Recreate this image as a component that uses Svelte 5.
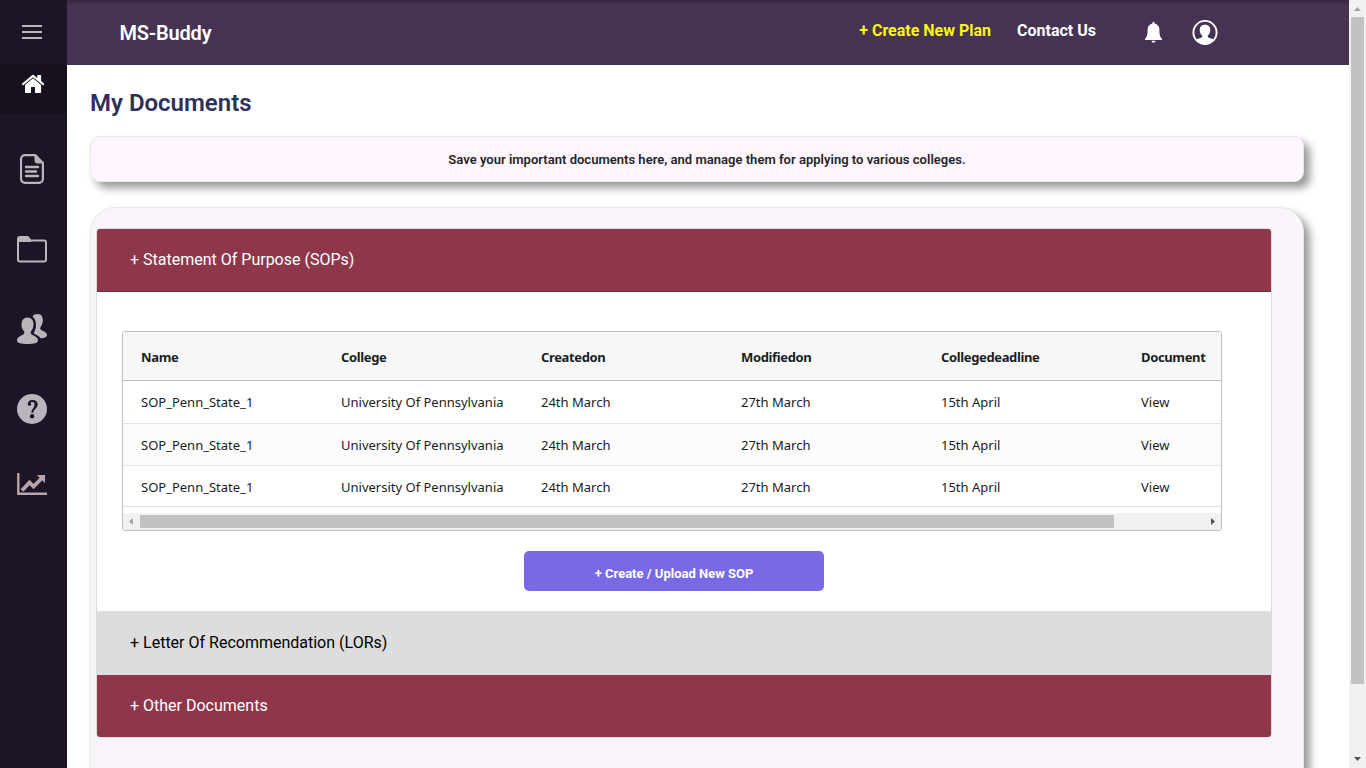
<script>
  const columns = ['Name', 'College', 'Createdon', 'Modifiedon', 'Collegedeadline', 'Document'];
  const row = ['SOP_Penn_State_1', 'University Of Pennsylvania', '24th March', '27th March', '15th April', 'View'];
  const rows = [row, row, row];
</script>

<div class="app">
  <aside class="sidebar">
    <button class="nav menu" aria-label="Menu">
      <svg width="20" height="14" viewBox="0 0 20 14"><path d="M0 0h20v2H0zM0 6h20v2H0zM0 12h20v2H0z" fill="#bab5bd" /></svg>
    </button>
    <button class="nav home" aria-label="Home">
      <svg width="24" height="20" viewBox="0 0 24 20" fill="#fff">
        <path d="M12 4.200 4 10.900v7.400c0 .5.300.7.700.7H10v-6h4v6h5.300c.5 0 .8-.3.8-.7v-7.400z" />
        <path d="M11 1.200Q12 .5 13 1.200L16.200 4V1.700q0-.6.6-.6h2.700q.6 0 .6.600V7l2.900 2.500q.5.500.1 1l-.5.600q-.5.400-1 0L12 3.200 2.600 11.100q-.5.400-1 0l-.6-.700q-.4-.5.100-1z" />
      </svg>
    </button>
    <button class="nav item" aria-label="Documents">
      <svg width="24" height="30" viewBox="0 0 24 30" fill="none" stroke="#bab5bd" stroke-linecap="round" stroke-linejoin="round">
        <path d="M5 1.100h10.200L22.900 9v15.800a4 4 0 0 1-4 4H5a4 4 0 0 1-4-4V5.100a4 4 0 0 1 4-4z" stroke-width="2.200" />
        <path d="M15 1.500V7a2 2 0 0 0 2 2h5.500z" fill="#bab5bd" stroke-width="1" />
        <path d="M6 13h12M6 17.500h10M6 22h12" stroke-width="2.400" />
      </svg>
    </button>
    <button class="nav item" aria-label="Folders">
      <svg width="30" height="27" viewBox="0 0 30 27">
        <path d="M1 5V3q0-2 2-2h7q1.500 0 2 1.500T14 4.500h13q2 0 2 2V23.500q0 2-2 2H3q-2 0-2-2z" fill="none" stroke="#bab5bd" stroke-width="2" />
        <path d="M1 6V3q0-2.500 2.500-2.500h6Q12 .5 12.500 3l1.500 1.500V6z" fill="#bab5bd" />
      </svg>
    </button>
    <button class="nav item" aria-label="People">
      <svg width="30" height="30" viewBox="0 0 30 30" fill="#bab5bd">
        <path d="M10.500 3.500c4 0 6 3 6 7 0 3-1 5-2.300 6.500-.8 1-.7 2.700.5 3.500 2.500 1.500 6.300 2.700 6.300 5.700 0 2.800-4 3.800-10.500 3.800S0 29 0 26.200c0-3 3.800-4.200 6.300-5.700 1.200-.8 1.300-2.500.5-3.500C5.500 15.500 4.500 13.500 4.500 10.500c0-4 2-7 6-7z" />
        <path d="M15.500 2.500C16.500.8 18.200 0 20.500 0c4 0 5.300 2.800 5.300 6.200 0 2.800-.8 4.700-2 6.300-.9 1.200-.9 2.600.4 3.400 2.400 1.400 5.800 2.400 5.800 5.100 0 2-2.500 3.200-6.300 3.300-1.700-2.800-5.600-3.800-6.600-4.900-.7-.8 1.300-3 1.800-6.400.5-4-.5-8.200-3.400-10.500z" />
      </svg>
    </button>
    <button class="nav item" aria-label="Help">
      <svg width="30" height="30" viewBox="0 0 30 30">
        <circle cx="15" cy="15" r="15" fill="#bab5bd" />
        <path d="M11.900 10.200C11.600 7.700 13.300 7 15.100 7c3 0 4.400 1.700 4.400 3.700 0 3.500-4.300 3.800-4.300 8" fill="none" stroke="#1d1526" stroke-width="1.900" />
        <circle cx="12.500" cy="10.200" r="1.600" fill="#1d1526" />
        <path d="M16.500 6.300c4.300.5 5.200 5.200 2.400 7.600l-3 2.300c1.700-3 2.300-6.800.6-9.900z" fill="#1d1526" />
        <circle cx="15.100" cy="22.300" r="2.200" fill="#1d1526" />
      </svg>
    </button>
    <button class="nav item chart" aria-label="Statistics">
      <svg width="30" height="22" viewBox="0 0 30 22">
        <path d="M1.300 0v20.700H30" fill="none" stroke="#b8a5ac" stroke-width="2.400" />
        <path d="m5 17.500 7.500-8 4 4 8-8" fill="none" stroke="#b8a5ac" stroke-width="3.800" />
        <path d="M20 2h8v8z" fill="#b8a5ac" />
      </svg>
    </button>
  </aside>

  <div class="page">
    <header>
      <span class="brand">MS-Buddy</span>
      <nav>
        <span class="create">+ Create New Plan</span>
        <span class="contact">Contact Us</span>
        <svg class="bell" width="17" height="21" viewBox="0 0 17 21" fill="#fff">
          <path d="M8.500 0c.8 0 1.300.6 1.300 1.400 3 .8 4.600 3.200 4.600 6.300 0 5 .6 7.300 2.600 9V18H0v-1.300c2-1.700 2.600-4 2.600-9 0-3.100 1.600-5.500 4.600-6.300C7.200.6 7.700 0 8.500 0zM6.500 18.800h4c-.2 1.200-1 1.900-2 1.900s-1.800-.7-2-1.900z" />
        </svg>
        <svg class="avatar" width="26" height="26" viewBox="0 0 26 26">
          <circle cx="13" cy="12.500" r="11.600" fill="none" stroke="#fff" stroke-width="1.900" />
          <path d="M13 4.700c3.500 0 5.300 2.100 5.300 5.300 0 2.300-.9 4-2.200 5.300-.5.500-.5 1.700.1 2.100 2 .9 3.800 1.200 5.500 1.900A11.500 11.500 0 0 1 13 24.500a11.500 11.500 0 0 1-8.700-5.200c1.700-.700 3.500-1 5.500-1.900.6-.4.600-1.600.1-2.100C8.600 14 7.700 12.300 7.700 10c0-3.200 1.800-5.300 5.300-5.300z" fill="#fff" />
        </svg>
      </nav>
    </header>
    <main>
      <h1>My Documents</h1>
      <div class="banner"><span>Save your important documents here, and manage them for applying to various colleges.</span></div>
      <section class="panel">
        <div class="accordion">
          <div class="head first"><span>+ Statement Of Purpose (SOPs)</span></div>
          <div class="body">
            <div class="grid">
              <div class="row labels">
                {#each columns as column}<span>{column}</span>{/each}
              </div>
              {#each rows as cells}
                <div class="row">
                  {#each cells as cell}<span>{cell}</span>{/each}
                </div>
              {/each}
              <div class="hscroll">
                <svg width="17" height="17" viewBox="0 0 17 17"><path d="M10 5v7L6 8.500z" fill="#a3a3a3" /></svg>
                <div class="track"><div class="thumb"></div></div>
                <svg width="17" height="17" viewBox="0 0 17 17"><path d="M7 5v7l4-3.500z" fill="#505050" /></svg>
              </div>
            </div>
            <button class="upload"><span>+ Create / Upload New SOP</span></button>
          </div>
          <div class="head light"><span>+ Letter Of Recommendation (LORs)</span></div>
          <div class="head last"><span>+ Other Documents</span></div>
        </div>
      </section>
    </main>
  </div>

  <div class="vscroll">
    <svg width="17" height="17" viewBox="0 0 17 17"><path d="M5 11h7L8.500 7z" fill="#a3a3a3" /></svg>
    <div class="vthumb"></div>
    <svg class="down" width="17" height="17" viewBox="0 0 17 17"><path d="M5 6h7l-3.500 4z" fill="#505050" /></svg>
  </div>
</div>

<style>
  :global(body) { margin: 0; overflow: hidden; }
  .app, .app * { box-sizing: border-box; }
  .app { display: flex; width: 1366px; height: 768px; overflow: hidden; background: #fff; font-family: Roboto, sans-serif; }
  button { border: 0; padding: 0; background: none; font-family: inherit; }
  svg { display: block; flex: none; }

  .sidebar { width: 67px; flex: none; background: #1d1526; display: flex; flex-direction: column; }
  .nav { width: 67px; flex: none; display: flex; align-items: center; justify-content: center; padding-right: 3px; }
  .menu { height: 64px; }
  .home { height: 50px; background: #17101d; padding: 0 2px 10px 0; }
  .item { height: 80px; }
  .home + .item { margin-top: 15px; }
  .chart { height: 70px; }

  .page { flex: 1; display: flex; flex-direction: column; min-width: 0; }
  header { height: 65px; flex: none; display: flex; justify-content: space-between; padding: 0 131px 0 53px; background: linear-gradient(#34263e, #463253 5px); color: #fff; }
  .brand { font-size: 20px; line-height: 24px; font-weight: 600; padding-top: 21px; letter-spacing: -.18px; margin-left: -.5px; }
  nav { display: flex; align-items: flex-start; font-size: 16px; line-height: 20px; font-weight: 700; }
  .create { color: #f8f810; margin: 21px 26px 0 0; }
  .contact { margin: 21px 49px 0 0; }
  .bell { margin: 22px 30px 0 0; }
  .avatar { margin-top: 20px; }

  main { flex: 1; display: flex; flex-direction: column; padding: 0 45px 0 23px; }
  h1 { margin: 24px 0 19px; font-size: 24px; line-height: 28px; font-weight: 600; color: #2e3159; }
  .banner, .panel { border: 1px solid #e6eae6; box-shadow: 6px 6px 8px #999; flex: none; }
  .banner { height: 46px; border-radius: 10px; background: #fff5ff; display: flex; align-items: center; justify-content: center; padding-left: 20px; font-size: 13px; font-weight: 600; letter-spacing: .02px; color: #212529; }
  .panel { margin-top: 25px; height: 640px; border-radius: 25px; background: #f9f5fb; padding: 20px 31px 0 5px; }
  .accordion { border: 1px solid #dcdcdc; border-radius: 4px; background: #fff; overflow: hidden; }
  .head { height: 63px; display: flex; align-items: center; padding: 0 0 2px 33px; font-size: 16px; color: #fff; background: #8e374b; }
  .first { border-bottom: 1px solid #7c2b3f; padding-bottom: 1px; }
  .light { height: 64px; background: #ddd; color: #000; }
  .last { height: 62px; }
  .body { height: 319px; padding: 39px 49px 0 25px; display: flex; flex-direction: column; }

  .grid { height: 200px; border: 1px solid #babfc7; border-radius: 3px; overflow: hidden; font-family: "Noto Sans", sans-serif; font-size: 13px; color: #181d1f; display: flex; flex-direction: column; }
  .row { display: flex; flex: none; align-items: center; height: 42px; padding-left: 18px; border-bottom: 1px solid #dde2eb; }
  .row span { width: 200px; flex: none; white-space: nowrap; }
  .row:nth-child(2) { height: 43px; }
  .row:nth-child(3) { background: #fcfcfc; }
  .row:nth-child(4) { height: 41px; padding-top: 2px; }
  .row.labels { height: 49px; padding-top: 1px; background: #f8f8f8; border-color: #babfc7; font-weight: 700; letter-spacing: -.36px; }
  .hscroll { margin-top: auto; height: 17px; display: flex; background: #f1f1f1; }
  .track { flex: 1; padding-top: 2px; }
  .thumb { width: 974px; height: 13px; background: #c1c1c1; }
  .upload { width: 300px; height: 40px; margin: 20px 0 0 402px; padding-top: 5px; border-radius: 5px; background: #7969e6; color: #fff; font-size: 13px; font-weight: 700; }

  .vscroll { width: 17px; flex: none; background: #f1f1f1; display: flex; flex-direction: column; }
  .vthumb { width: 13px; height: 667px; margin-left: 2px; background: #c1c1c1; }
  .down { margin-top: auto; }
</style>
